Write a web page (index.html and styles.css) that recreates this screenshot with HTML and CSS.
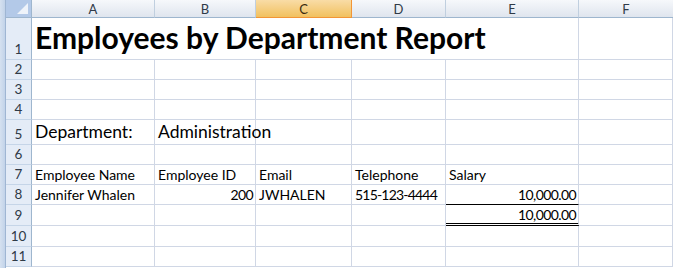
FILE: index.html
```html
<!DOCTYPE html>
<html lang="en">
<head>
    <meta charset="UTF-8">
    <title>Employees by Department Report</title>
    <link rel="stylesheet" href="styles.css">
</head>
<body>

<div class="window">
    <div class="frame"></div>

    <!-- Sheet grid -->
    <div class="sheet">
        <!-- column headers -->
        <div class="corner"><span class="tri"></span></div>
        <div class="colhead">A</div>
        <div class="colhead">B</div>
        <div class="colhead active">C</div>
        <div class="colhead">D</div>
        <div class="colhead">E</div>
        <div class="colhead last">F</div>

        <!-- row 1: title overflows A..E -->
        <div class="rowhead">1</div>
        <div class="cell title">Employees by Department Report</div>
        <div class="cell"></div>

        <!-- rows 2-4 -->
        <div class="rowhead">2</div>
        <div class="cell"></div><div class="cell"></div><div class="cell"></div><div class="cell"></div><div class="cell"></div><div class="cell"></div>
        <div class="rowhead">3</div>
        <div class="cell"></div><div class="cell"></div><div class="cell"></div><div class="cell"></div><div class="cell"></div><div class="cell"></div>
        <div class="rowhead">4</div>
        <div class="cell"></div><div class="cell"></div><div class="cell"></div><div class="cell"></div><div class="cell"></div><div class="cell"></div>

        <!-- row 5 -->
        <div class="rowhead">5</div>
        <div class="cell big">Department:</div>
        <div class="cell big">Administration</div>
        <div class="cell"></div><div class="cell"></div><div class="cell"></div><div class="cell"></div>

        <!-- row 6 -->
        <div class="rowhead">6</div>
        <div class="cell"></div><div class="cell"></div><div class="cell"></div><div class="cell"></div><div class="cell"></div><div class="cell"></div>

        <!-- row 7: column titles -->
        <div class="rowhead">7</div>
        <div class="cell">Employee Name</div>
        <div class="cell">Employee ID</div>
        <div class="cell">Email</div>
        <div class="cell">Telephone</div>
        <div class="cell">Salary</div>
        <div class="cell"></div>

        <!-- row 8: data -->
        <div class="rowhead">8</div>
        <div class="cell">Jennifer Whalen</div>
        <div class="cell num">200</div>
        <div class="cell">JWHALEN</div>
        <div class="cell digits">515-123-4444</div>
        <div class="cell num underline">10,000.00</div>
        <div class="cell"></div>

        <!-- row 9: total -->
        <div class="rowhead">9</div>
        <div class="cell"></div><div class="cell"></div><div class="cell"></div><div class="cell"></div>
        <div class="cell num total">10,000.00</div>
        <div class="cell"></div>

        <!-- rows 10-11 -->
        <div class="rowhead">10</div>
        <div class="cell"></div><div class="cell"></div><div class="cell"></div><div class="cell"></div><div class="cell"></div><div class="cell"></div>
        <div class="rowhead">11</div>
        <div class="cell"></div><div class="cell"></div><div class="cell"></div><div class="cell"></div><div class="cell"></div><div class="cell"></div>
    </div>
</div>

</body>
</html>
```

FILE: styles.css
```css
body {
    margin: 0;
    background-color: #ffffff;
    font-family: Lato, "Open Sans", sans-serif;
    color: #000;
    overflow: hidden;
}

.window {
    display: flex;
    height: 268px;
}

.frame {
    width: 5px;
    flex: none;
    background: linear-gradient(to right, #d5e1f0, #c2d3e9);
    border-right: 1px solid #9fb6d3;
}

.sheet {
    flex: 1;
    display: grid;
    grid-template-columns: 26px 123px 101px 96px 94px 133px 1fr;
    grid-template-rows: 18px 42px 20px 20px 20px 25px 20px 20px 20px 21px 21px 20px 1fr;
}

.sheet > div {
    box-sizing: border-box;
}

/* headers */

.corner {
    position: relative;
    background-color: #b3c9e8;
    border-right: 1px solid #9eb6ce;
    border-bottom: 1px solid #9eb6ce;
}

.corner .tri {
    position: absolute;
    right: 3px;
    bottom: 3px;
    width: 0;
    height: 0;
    border-left: 11px solid transparent;
    border-bottom: 11px solid #eef3fa;
}

.colhead {
    display: flex;
    align-items: center;
    justify-content: center;
    font-size: 13px;
    color: #2f3a47;
    background: linear-gradient(to bottom, #f6f8fb, #dfe5ee);
    border-right: 1px solid #c0cfdf;
    border-bottom: 1px solid #9eb6ce;
}

.colhead.active {
    background: linear-gradient(to bottom, #f9dca6, #f1c15f);
    border-right: 1px solid #f29536;
    border-bottom: 1px solid #f29536;
    color: #3a2a10;
}

.colhead.last {
    border-right: none;
}

.rowhead {
    display: flex;
    align-items: flex-end;
    justify-content: center;
    padding-bottom: 2px;
    font-size: 13.5px;
    color: #2f3a47;
    background-color: #e4ecf7;
    border-right: 1px solid #9eb6ce;
    border-bottom: 1px solid #c5d5e8;
}

/* cells */

.cell {
    display: flex;
    align-items: flex-end;
    padding: 0 2px 1px 3px;
    font-size: 14px;
    white-space: nowrap;
    border-right: 1px solid #d0d7e5;
    border-bottom: 1px solid #d0d7e5;
}

.title {
    grid-column: span 5;
    font-size: 30px;
    font-weight: bold;
    padding-bottom: 4px;
}

.big {
    font-size: 17.5px;
    padding-bottom: 2px;
}

.num {
    justify-content: flex-end;
    letter-spacing: -0.6px;
    padding-right: 2px;
}

.digits {
    letter-spacing: -0.8px;
}

.underline {
    border-bottom: 1px solid #000;
}

.total {
    border-bottom: 3px double #000;
    padding-bottom: 0;
}
```
